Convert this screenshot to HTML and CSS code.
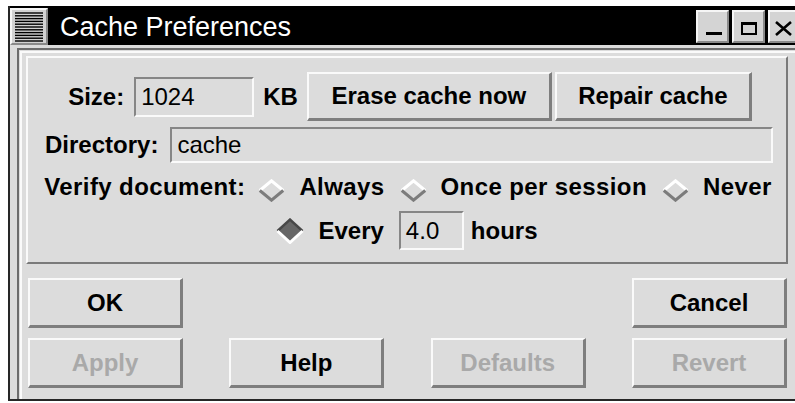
FILE: index.html
```html
<!DOCTYPE html>
<html>
<head>
<meta charset="utf-8">
<title>Cache Preferences</title>
<link rel="stylesheet" href="styles.css">
</head>
<body>
<div class="window">
  <div class="titlebar">
    <div class="menu-icon">
      <svg width="32" height="31" viewBox="0 0 32 31">
        <g stroke="#000" stroke-width="1.4">
          <line x1="2" y1="2" x2="30" y2="2"/>
          <line x1="2" y1="4.8" x2="30" y2="4.8"/>
          <line x1="2" y1="7.6" x2="30" y2="7.6"/>
          <line x1="2" y1="10.4" x2="30" y2="10.4"/>
          <line x1="2" y1="13.2" x2="30" y2="13.2"/>
          <line x1="2" y1="16" x2="30" y2="16"/>
          <line x1="2" y1="18.8" x2="30" y2="18.8"/>
          <line x1="2" y1="21.6" x2="30" y2="21.6"/>
          <line x1="2" y1="24.4" x2="30" y2="24.4"/>
          <line x1="2" y1="27.2" x2="30" y2="27.2"/>
          <line x1="2" y1="30" x2="30" y2="30"/>
        </g>
      </svg>
    </div>
    <div class="title">Cache Preferences</div>
    <div class="wm-buttons">
      <div class="wm-btn">
        <svg width="29" height="29" viewBox="0 0 29 29"><rect x="8" y="20" width="16" height="3" fill="#000"/></svg>
      </div>
      <div class="wm-btn">
        <svg width="29" height="29" viewBox="0 0 29 29"><rect x="8" y="11" width="14" height="11" fill="none" stroke="#000" stroke-width="2"/><rect x="7" y="10" width="16" height="3" fill="#000"/></svg>
      </div>
      <div class="wm-btn">
        <svg width="29" height="29" viewBox="0 0 29 29"><path d="M6 10 L21 23 M21 10 L6 23" stroke="#000" stroke-width="2.6"/></svg>
      </div>
    </div>
  </div>

  <div class="client">
    <div class="client-inner">
      <div class="panel">
        <div class="row row-size">
          <span class="lbl">Size:</span>
          <div class="entry entry-size">1024</div>
          <span class="lbl kb">KB</span>
          <div class="btn btn-erase">Erase cache now</div>
          <div class="btn btn-repair">Repair cache</div>
        </div>
        <div class="row row-dir">
          <span class="lbl">Directory:</span>
          <div class="entry entry-dir">cache</div>
        </div>
        <div class="row row-verify">
          <span class="lbl verify-lbl">Verify document:</span>
          <span class="radio">
            <svg class="diamond" width="27" height="23" viewBox="0 0 27 23"><polyline points="1.8,11.5 13.5,1.8 25.2,11.5" fill="none" stroke="#ffffff" stroke-width="3"/><polyline points="1.8,11.5 13.5,21.2 25.2,11.5" fill="none" stroke="#7c7c7c" stroke-width="3"/></svg>
            <span class="lbl">Always</span>
          </span>
          <span class="radio">
            <svg class="diamond" width="27" height="23" viewBox="0 0 27 23"><polyline points="1.8,11.5 13.5,1.8 25.2,11.5" fill="none" stroke="#ffffff" stroke-width="3"/><polyline points="1.8,11.5 13.5,21.2 25.2,11.5" fill="none" stroke="#7c7c7c" stroke-width="3"/></svg>
            <span class="lbl">Once per session</span>
          </span>
          <span class="radio">
            <svg class="diamond" width="27" height="23" viewBox="0 0 27 23"><polyline points="1.8,11.5 13.5,1.8 25.2,11.5" fill="none" stroke="#ffffff" stroke-width="3"/><polyline points="1.8,11.5 13.5,21.2 25.2,11.5" fill="none" stroke="#7c7c7c" stroke-width="3"/></svg>
            <span class="lbl">Never</span>
          </span>
        </div>
        <div class="row row-every">
          <span class="radio">
            <svg class="diamond-on" width="28" height="26" viewBox="0 0 28 26"><polygon points="14,1.5 26.5,13 14,24.5 1.5,13" fill="#666666"/><polyline points="1.5,13 14,1.5 26.5,13" fill="none" stroke="#474747" stroke-width="2.4"/><polyline points="1.5,13 14,24.5 26.5,13" fill="none" stroke="#ffffff" stroke-width="3"/></svg>
            <span class="lbl">Every</span>
          </span>
          <div class="entry entry-hours">4.0</div>
          <span class="lbl">hours</span>
        </div>
      </div>

      <div class="actions">
        <div class="action-row">
          <div class="btn btn-action">OK</div>
          <div class="btn btn-action">Cancel</div>
        </div>
        <div class="action-row">
          <div class="btn btn-action disabled">Apply</div>
          <div class="btn btn-action">Help</div>
          <div class="btn btn-action disabled">Defaults</div>
          <div class="btn btn-action disabled">Revert</div>
        </div>
      </div>
    </div>
  </div>
</div>
</body>
</html>
```

FILE: styles.css
```css
* {
  box-sizing: border-box;
}

html,
body {
  margin: 0;
  height: 100%;
  overflow: hidden;
  background: #ffffff;
}

body {
  padding: 6px 0 0 8px;
  font-family: "Liberation Sans", Arial, sans-serif;
  color: #000;
}

/* window frame */
.window {
  width: 802px;
  height: 395px;
  background: #dcdcdc;
  border-left: 2px solid #262626;
  border-bottom: 2px solid #262626;
  display: flex;
  flex-direction: column;
}

/* title bar */
.titlebar {
  height: 39px;
  flex: none;
  background: #000;
  display: flex;
  align-items: flex-start;
}

.menu-icon {
  width: 38px;
  height: 37px;
  margin-top: 2px;
  background: #d2d2d2;
  border: 2px solid;
  border-color: #f6f6f6 #8a8a8a #8a8a8a #f6f6f6;
  display: flex;
  align-items: center;
  justify-content: center;
}

.title {
  margin-left: 12px;
  padding-top: 3px;
  color: #fff;
  font-size: 27px;
  line-height: 36px;
  white-space: nowrap;
}

.wm-buttons {
  margin-left: auto;
  margin-right: 9px;
  margin-top: 4px;
  display: flex;
  gap: 3px;
}

.wm-btn {
  width: 33px;
  height: 33px;
  background: #d4d4d4;
  border: 2px solid;
  border-color: #f6f6f6 #8a8a8a #8a8a8a #f6f6f6;
}

.wm-btn svg {
  display: block;
}

/* client area */
.client {
  flex: 1;
  margin: 3px 0 0 7px;
  border-top: 2px solid #6c6c6c;
  border-left: 2px solid #6c6c6c;
  padding: 1px 0 0 1px;
}

.client-inner {
  height: 100%;
  border-top: 2px solid #fafafa;
  border-left: 2px solid #fafafa;
}

/* settings group */
.panel {
  width: 762px;
  height: 208px;
  margin: 3px 0 0 4px;
  border: 2px solid;
  border-color: #fafafa #7a7a7a #7a7a7a #fafafa;
  padding-top: 14px;
  display: flex;
  flex-direction: column;
}

.row {
  display: flex;
  align-items: center;
  flex: none;
}

.lbl {
  font-weight: bold;
  font-size: 24px;
  white-space: nowrap;
}

.row-size {
  height: 49px;
  justify-content: center;
  padding-left: 6px;
}

.row-size .entry-size {
  margin-left: 10px;
}

.row-size .kb {
  margin-left: 9px;
}

.btn-erase {
  margin-left: 9px;
  width: 245px;
  height: 49px;
}

.btn-repair {
  margin-left: 3px;
  width: 197px;
  height: 49px;
}

.row-dir {
  height: 36px;
  margin-top: 6px;
  padding: 0 13px 0 17px;
}

.entry-dir {
  flex: 1;
  height: 36px;
  margin-left: 12px;
}

.row-verify {
  height: 34px;
  margin-top: 7px;
  justify-content: center;
  padding-left: 2px;
}

.row-verify .lbl {
  letter-spacing: 0.4px;
}

.verify-lbl {
  margin-right: 13px;
}

.radio {
  display: flex;
  align-items: center;
}

.row-verify .radio + .radio {
  margin-left: 15px;
}

.diamond {
  margin: 6px 14px 0 0;
  flex: none;
}

.diamond-on {
  margin-right: 14px;
  flex: none;
}

.row-every {
  height: 39px;
  margin-top: 7px;
  justify-content: center;
}

.entry-hours {
  width: 65px;
  height: 39px;
  margin: 0 7px 0 15px;
}

/* text entry */
.entry {
  background: #dcdcdc;
  border: 2px solid;
  border-color: #868686 #fafafa #fafafa #868686;
  padding-left: 5px;
  font-size: 24px;
  display: flex;
  align-items: center;
  white-space: nowrap;
}

.entry-size {
  width: 120px;
  height: 40px;
}

/* push buttons */
.btn {
  background: #dcdcdc;
  border-style: solid;
  border-width: 2px 3px 3px 2px;
  border-color: #fafafa #7e7e7e #7e7e7e #fafafa;
  display: flex;
  align-items: center;
  justify-content: center;
  font-weight: bold;
  font-size: 24px;
  white-space: nowrap;
}

.btn.disabled {
  color: #a9a9a9;
}

/* dialog action buttons */
.actions {
  width: 765px;
  padding: 14px 0 0 6px;
  display: flex;
  flex-direction: column;
  gap: 10px;
}

.action-row {
  display: flex;
  justify-content: space-between;
}

.btn-action {
  width: 155px;
  height: 50px;
}
```
